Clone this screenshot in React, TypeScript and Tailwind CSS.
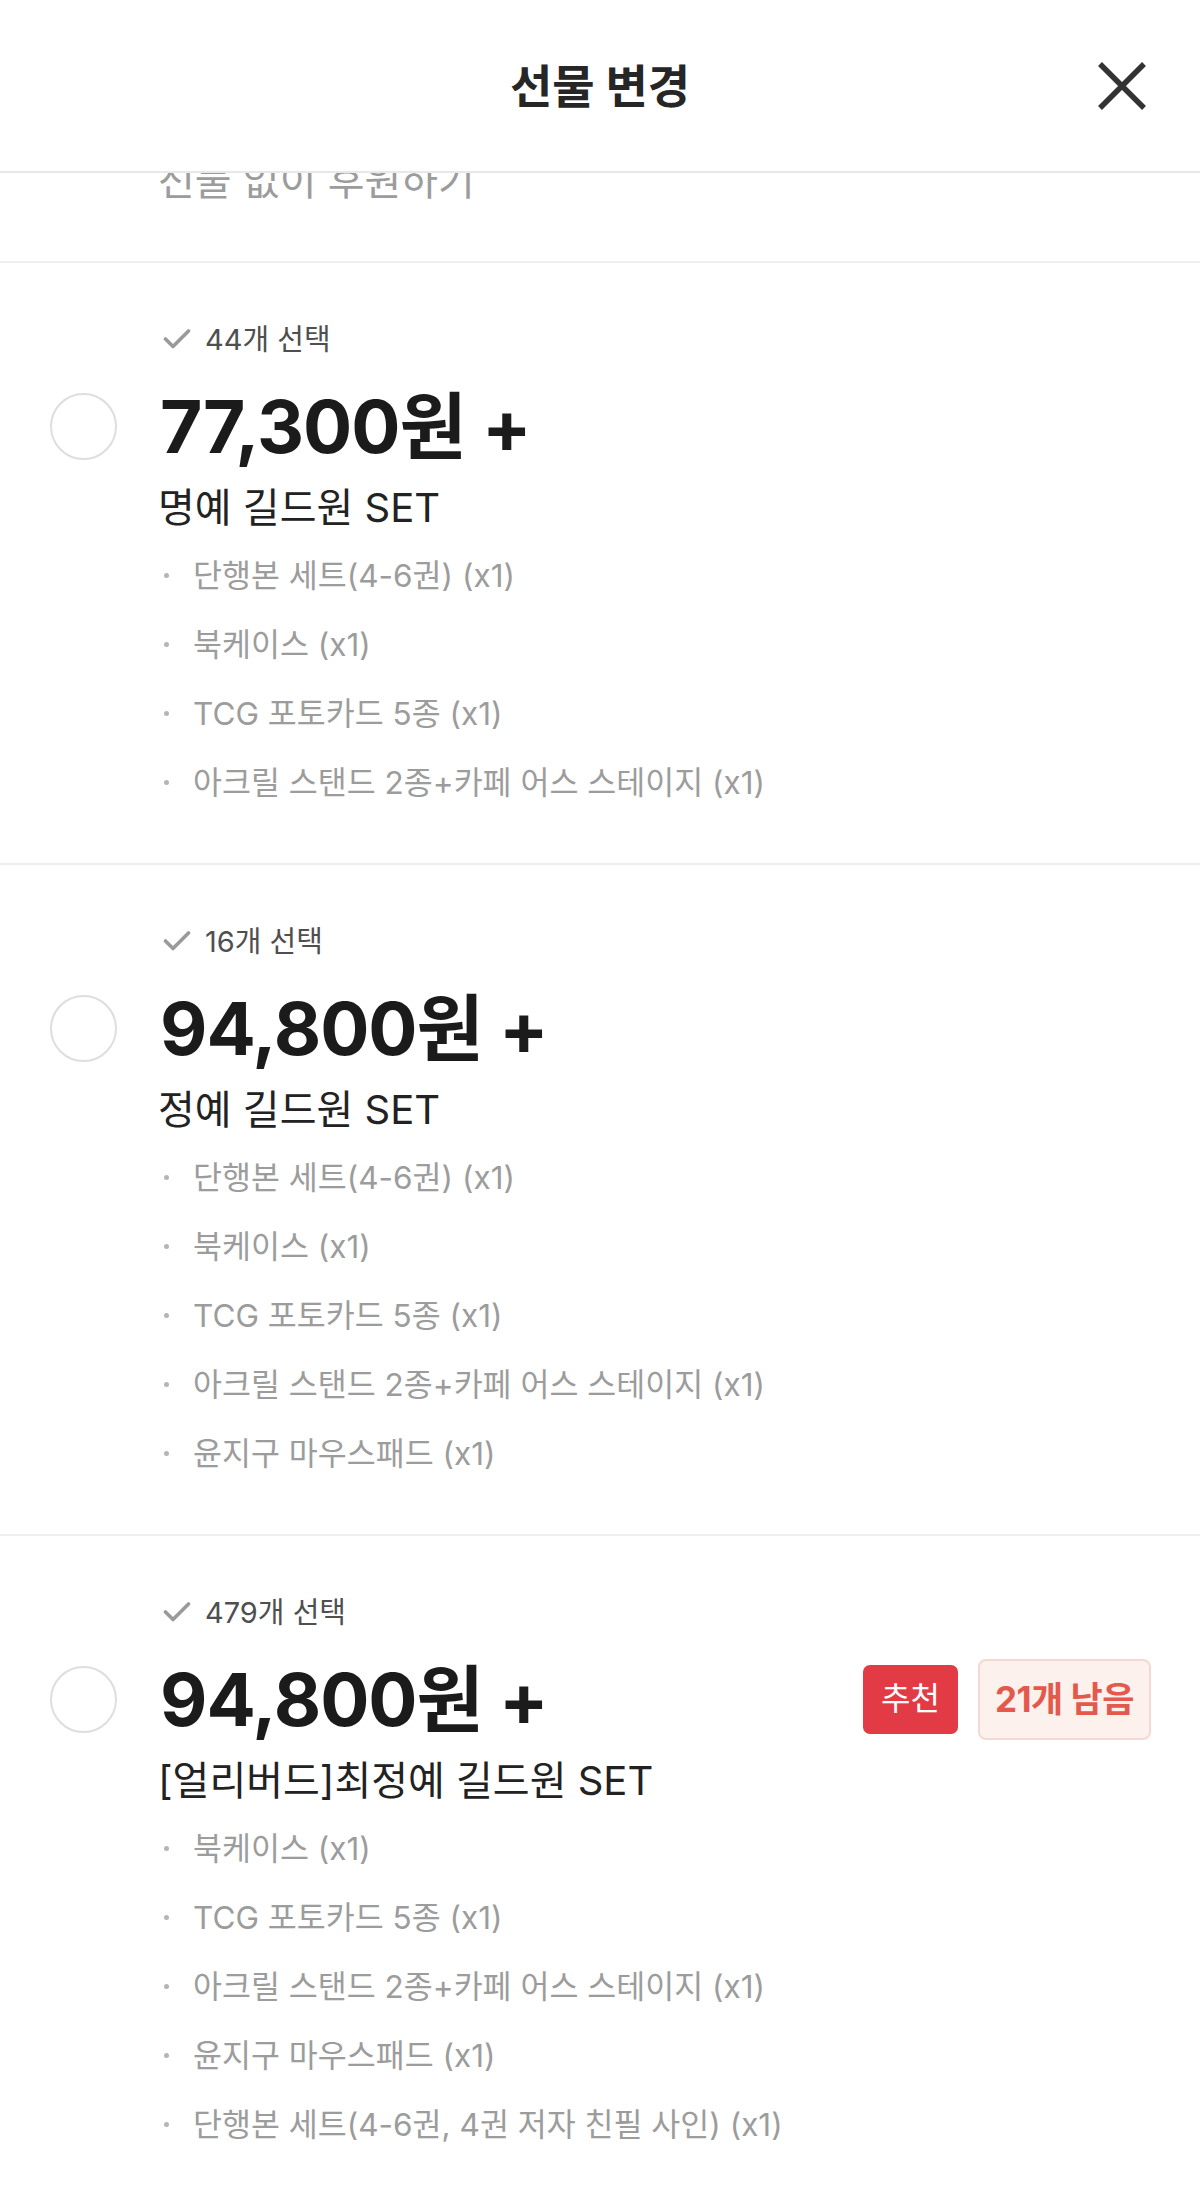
import React from "react";

const FONT = { fontFamily: 'Inter, "Noto Sans CJK KR", sans-serif' };

type Option = {
  count: string;
  price: string;
  name: string;
  items: string[];
  badges?: boolean;
};

const options: Option[] = [
  {
    count: "44개 선택",
    price: "77,300원 +",
    name: "명예 길드원 SET",
    items: [
      "단행본 세트(4-6권) (x1)",
      "북케이스 (x1)",
      "TCG 포토카드 5종 (x1)",
      "아크릴 스탠드 2종+카페 어스 스테이지 (x1)",
    ],
  },
  {
    count: "16개 선택",
    price: "94,800원 +",
    name: "정예 길드원 SET",
    items: [
      "단행본 세트(4-6권) (x1)",
      "북케이스 (x1)",
      "TCG 포토카드 5종 (x1)",
      "아크릴 스탠드 2종+카페 어스 스테이지 (x1)",
      "윤지구 마우스패드 (x1)",
    ],
  },
  {
    count: "479개 선택",
    price: "94,800원 +",
    name: "[얼리버드]최정예 길드원 SET",
    items: [
      "북케이스 (x1)",
      "TCG 포토카드 5종 (x1)",
      "아크릴 스탠드 2종+카페 어스 스테이지 (x1)",
      "윤지구 마우스패드 (x1)",
      "단행본 세트(4-6권, 4권 저자 친필 사인) (x1)",
    ],
    badges: true,
  },
];

function CheckIcon() {
  return (
    <svg width="28" height="22" viewBox="0 0 28 22" fill="none">
      <path d="M2.5 11 L10 18.5 L25.5 3" stroke="#9a9a9a" strokeWidth="3.6" strokeLinecap="round" strokeLinejoin="round" />
    </svg>
  );
}

function OptionSection({ o }: { o: Option }) {
  return (
    <section className="border-b-2 border-[#efefef] pt-[56px] pb-[46px]">
      <div className="h-[40px] flex items-center pl-[163px] gap-[14px]">
        <CheckIcon />
        <span className="text-[29px] text-[#4f4f4f] leading-none">{o.count}</span>
      </div>
      <div className="mt-[27px] h-[80px] flex items-center">
        <div className="w-[160px] pl-[50px] flex items-center">
          <div className="w-[67px] h-[67px] rounded-full border-2 border-[#dedede]" />
        </div>
        <div className="text-[73px] font-bold text-[#1b1b1b] leading-none tracking-[-1px]">{o.price}</div>
        {o.badges && (
          <div className="ml-auto pr-[49px] flex items-center gap-[20px]">
            <div className="w-[95px] h-[69px] rounded-[7px] bg-[#e23b45] flex items-center justify-center text-white text-[32px] leading-none">
              추천
            </div>
            <div className="w-[173px] h-[81px] rounded-[8px] bg-[#fdf1ee] border-2 border-[#f5d8d2] flex items-center justify-center text-[#e4594b] text-[35px] font-bold leading-none tracking-[-0.5px]">
              21개 남음
            </div>
          </div>
        )}
      </div>
      <div className="mt-[17px] h-[50px] flex items-center pl-[158px] text-[40px] text-[#222222] leading-none">
        {o.name}
      </div>
      <ul className="mt-[8px] pl-[164px]">
        {o.items.map((it, i) => (
          <li key={i} className="h-[69px] flex items-center">
            <span className="w-[5px] h-[5px] rounded-full bg-[#b5b5b5] mr-[24px]" />
            <span className="text-[31.5px] text-[#9c9c9c] leading-none">{it}</span>
          </li>
        ))}
      </ul>
    </section>
  );
}

export default function App() {
  return (
    <div style={FONT} className="w-[1200px] h-[2195px] overflow-hidden bg-white">
      <header className="h-[173px] border-b-2 border-[#e8e8e8] grid grid-cols-[1fr_auto_1fr] items-center">
        <div />
        <div className="text-[46px] font-bold text-[#262626] leading-none">선물 변경</div>
        <div className="flex justify-end pr-[53px]">
          <svg width="50" height="50" viewBox="0 0 50 50" fill="none">
            <path d="M3 3 L47 47 M47 3 L3 47" stroke="#333333" strokeWidth="5.5" strokeLinecap="butt" />
          </svg>
        </div>
      </header>
      <div className="h-[90px] overflow-hidden border-b-2 border-[#efefef] pl-[158px]">
        <div className="-mt-[17px] text-[40px] text-[#9c9c9c] leading-[50px]">선물 없이 후원하기</div>
      </div>
      {options.map((o, i) => (
        <OptionSection key={i} o={o} />
      ))}
    </div>
  );
}
